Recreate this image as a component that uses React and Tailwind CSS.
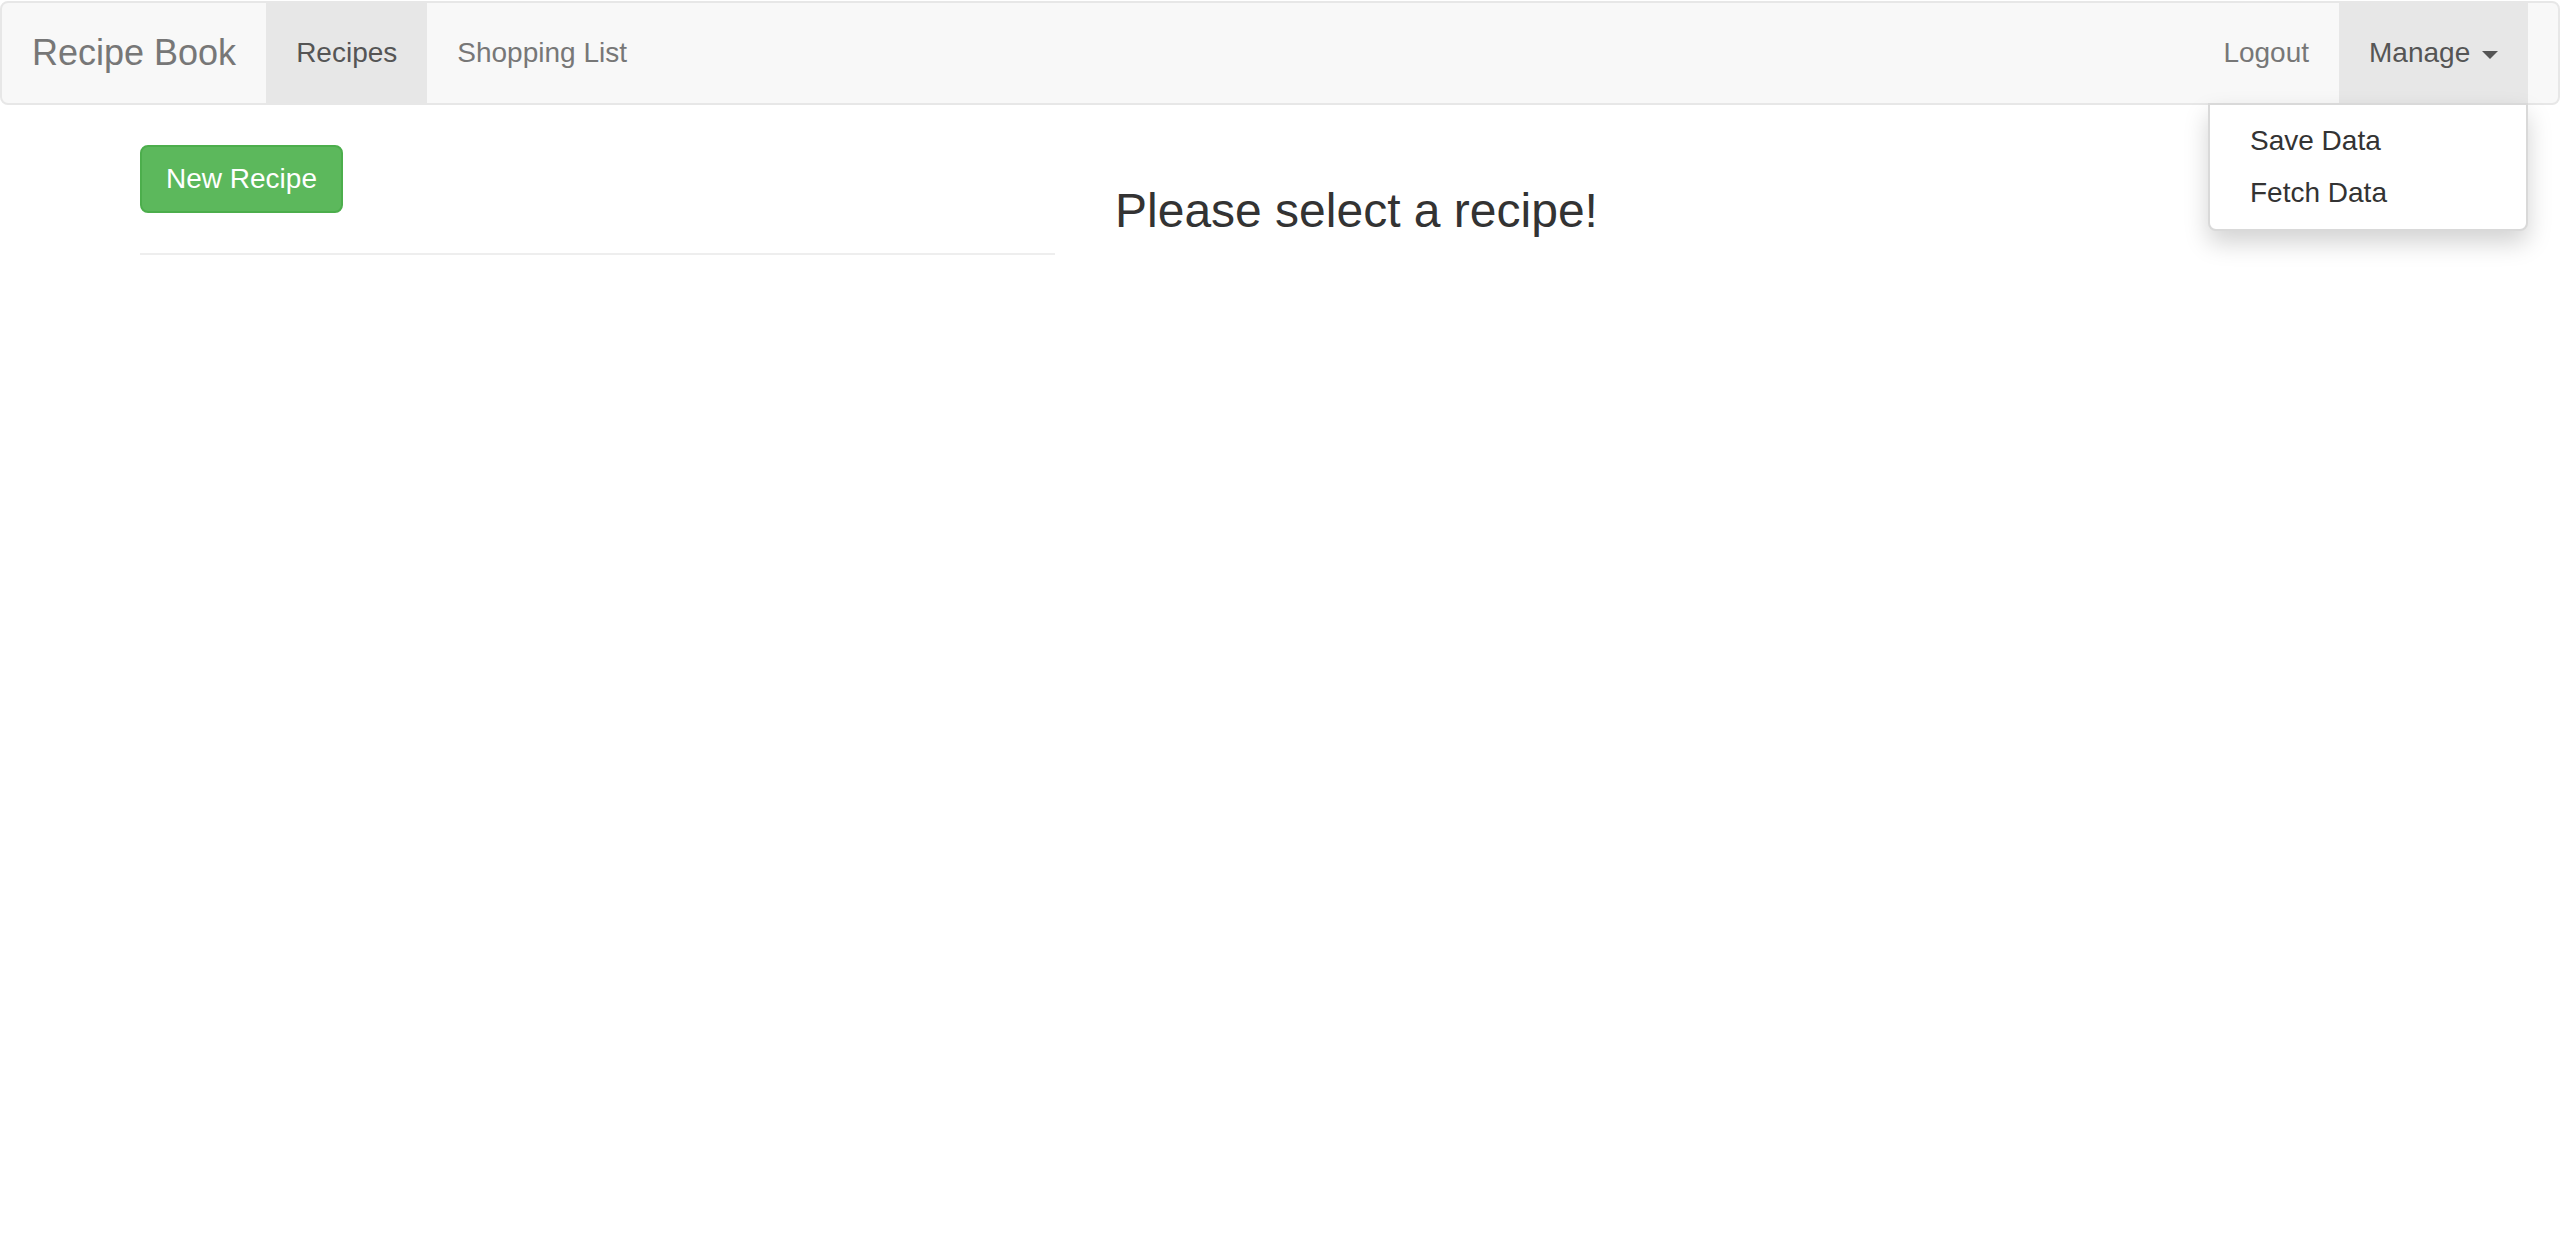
import React, { useState } from 'react';

// Recipe book page: navbar + recipe list column + detail column
const NavLink = ({ active, children }) => (
  <li>
    <a
      href="#"
      className={
        active
          ? 'block px-[30px] py-[30px] leading-[40px] bg-[#e7e7e7] text-[#555]'
          : 'block px-[30px] py-[30px] leading-[40px] text-[#777] hover:text-[#333]'
      }
    >
      {children}
    </a>
  </li>
);

const App = () => {
  const [open, setOpen] = useState(true);

  return (
    <div className="min-h-screen bg-white pt-px font-['Liberation_Sans',Arial,sans-serif] text-[28px] leading-[40px] text-[#333]">
      <nav className="mb-10 flex justify-between rounded-lg border-2 border-[#e7e7e7] bg-[#f8f8f8] pr-[30px]">
        <div className="flex">
          <a href="#" className="block h-[100px] px-[30px] py-[30px] text-[36px] leading-[40px] text-[#777]">
            Recipe Book
          </a>
          <ul className="flex">
            <NavLink active>Recipes</NavLink>
            <NavLink>Shopping List</NavLink>
          </ul>
        </div>
        <ul className="flex">
          <NavLink>Logout</NavLink>
          <li className="relative">
            <a
              href="#"
              onClick={(e) => {
                e.preventDefault();
                setOpen(!open);
              }}
              className={
                open
                  ? 'block px-[30px] py-[30px] leading-[40px] bg-[#e7e7e7] text-[#555]'
                  : 'block px-[30px] py-[30px] leading-[40px] text-[#777]'
              }
            >
              Manage{' '}
              <span className="ml-[4px] inline-block h-0 w-0 align-middle border-t-[8px] border-x-[8px] border-x-transparent border-t-current"></span>
            </a>
            {open && (
              <ul className="absolute right-0 top-full z-10 min-w-[320px] rounded-b-lg border-2 border-[rgba(0,0,0,0.15)] bg-white py-[10px] text-[28px] shadow-[0_12px_24px_rgba(0,0,0,0.175)]">
                <li>
                  <a href="#" className="block whitespace-nowrap px-[40px] py-[6px] leading-[40px] text-[#333] hover:bg-[#f5f5f5]">
                    Save Data
                  </a>
                </li>
                <li>
                  <a href="#" className="block whitespace-nowrap px-[40px] py-[6px] leading-[40px] text-[#333] hover:bg-[#f5f5f5]">
                    Fetch Data
                  </a>
                </li>
              </ul>
            )}
          </li>
        </ul>
      </nav>

      <div className="mx-auto flex w-[2340px]">
        <div className="w-[975px] px-[30px]">
          <button className="rounded-lg border-2 border-[#4cae4c] bg-[#5cb85c] px-[24px] py-[12px] leading-[40px] text-white">
            New Recipe
          </button>
          <hr className="my-10 border-0 border-t-2 border-[#eee]" />
        </div>
        <div className="w-[1365px] px-[30px]">
          <h3 className="mt-10 mb-5 text-[48px] font-normal leading-[1.1] text-[#333]">Please select a recipe!</h3>
        </div>
      </div>
    </div>
  );
};

export default App;
